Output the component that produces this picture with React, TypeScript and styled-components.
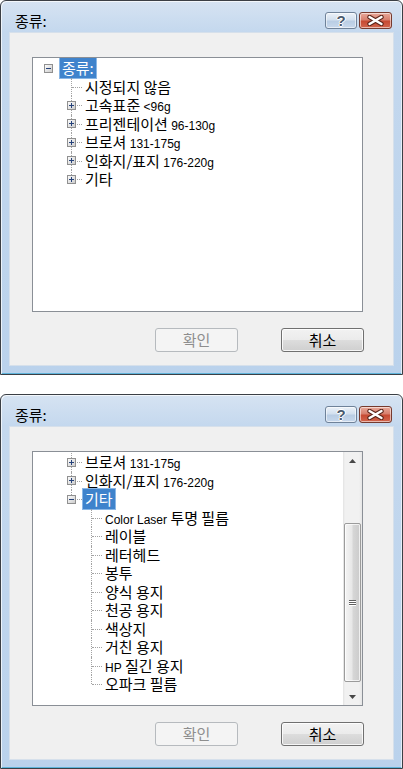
import React from 'react';
import styled, { createGlobalStyle } from 'styled-components';

const GlobalStyle = createGlobalStyle`
    html, body {
        margin: 0;
        padding: 0;
        background: #ffffff;
    }
    body {
        font-family: "Noto Sans CJK KR", "Liberation Sans", sans-serif;
        color: #000;
    }
`;

const Page = styled.div`
    width: 403px;
    display: flex;
    flex-direction: column;
    gap: 19px;
`;

const Window = styled.div`
    height: 375px;
    box-sizing: border-box;
    border: 1px solid #3b3f45;
    border-radius: 6px 6px 0 0;
    background: linear-gradient(to bottom, #d6e3f2 0px, #c4d8ee 31px, #bad2ec 100%);
    box-shadow: inset 1px 1px 0 rgba(255, 255, 255, 0.7), inset -1px 0 0 rgba(255, 255, 255, 0.6), inset 0 -1px 0 #5fb4da;
    padding: 0 8px 8px 8px;
    display: flex;
    flex-direction: column;
`;

const TitleBar = styled.div`
    height: 31px;
    box-sizing: border-box;
    display: flex;
    align-items: flex-start;
    justify-content: space-between;
    padding: 11px 2px 0 6px;
`;

const Title = styled.div`
    font-size: 15px;
    line-height: 17px;
    color: #000;
`;

const CaptionButtons = styled.div`
    display: flex;
    gap: 2px;
`;

const CaptionButton = styled.div<{ $close?: boolean }>`
    width: ${p => (p.$close ? 33 : 32)}px;
    height: 17px;
    box-sizing: border-box;
    border: 1px solid ${p => (p.$close ? '#763a2e' : '#6f8299')};
    border-radius: 3px;
    background: ${p =>
        p.$close
            ? 'linear-gradient(to bottom, #e9a99b 0%, #d7806e 45%, #c74a33 55%, #d2664e 100%)'
            : 'linear-gradient(to bottom, #ecf2f9 0%, #d3e0ef 45%, #b9cde4 55%, #c8d8ec 100%)'};
    box-shadow: inset 0 0 0 1px rgba(255, 255, 255, 0.55);
    display: flex;
    align-items: center;
    justify-content: center;
`;

const HelpGlyph = styled.span`
    font-family: "Liberation Sans", sans-serif;
    font-weight: bold;
    font-size: 15px;
    line-height: 15px;
    color: #4a5a6e;
    text-shadow: 1px 0 0 #fff, -1px 0 0 #fff, 0 1px 0 #fff, 0 -1px 0 #fff;
`;

const Client = styled.div`
    flex: 1;
    background: #f0f0f0;
    border: 1px solid #d6e0eb;
    padding: 24px 29px 0 22px;
    display: flex;
    flex-direction: column;
`;

const TreeBox = styled.div`
    width: 331px;
    height: 255px;
    box-sizing: border-box;
    border: 1px solid #8a8f96;
    background: #ffffff;
    display: flex;
    overflow: hidden;
`;

const TreeList = styled.div`
    flex: 1;
    padding-top: 1px;
    display: flex;
    flex-direction: column;
`;

const Row = styled.div<{ $indent: number }>`
    height: 18.5px;
    flex: none;
    display: flex;
    align-items: center;
    padding-left: ${p => p.$indent}px;
`;

const Joint = styled.div<{ $line: boolean; $last: boolean }>`
    width: 20px;
    height: 100%;
    flex: none;
    position: relative;
    display: flex;
    align-items: center;
    padding-left: 5px;
    box-sizing: border-box;

    &::before {
        content: '';
        display: ${p => (p.$line ? 'block' : 'none')};
        position: absolute;
        left: 9px;
        top: 0;
        bottom: ${p => (p.$last ? '50%' : '0')};
        border-left: 1px dotted #a3a3a3;
    }

    &::after {
        content: '';
        display: ${p => (p.$line ? 'block' : 'none')};
        position: absolute;
        left: 10px;
        right: 0;
        top: 50%;
        border-top: 1px dotted #a3a3a3;
    }

    svg {
        position: relative;
        z-index: 1;
        display: block;
    }
`;

const Label = styled.div<{ $selected?: boolean }>`
    height: ${p => (p.$selected ? '22px' : '18.5px')};
    box-sizing: border-box;
    padding: 0 2px;
    border: 1px solid ${p => (p.$selected ? '#8ab7e6' : 'transparent')};
    background: ${p => (p.$selected ? '#3f83cc' : 'transparent')};
    color: ${p => (p.$selected ? '#ffffff' : '#000000')};
    font-size: 15px;
    line-height: ${p => (p.$selected ? '20px' : '16.5px')};
    white-space: nowrap;
    flex: none;
`;

const Latin = styled.span`
    font-family: "Liberation Sans", sans-serif;
    font-size: 12px;
`;

const ScrollBar = styled.div`
    width: 19px;
    flex: none;
    display: flex;
    flex-direction: column;
    background: linear-gradient(to right, #e2e2e2 0px, #f1f1f1 2px, #f1f1f1 16px, #e6e6e6 19px);
`;

const ArrowButton = styled.div`
    height: 17px;
    flex: none;
    display: flex;
    align-items: center;
    justify-content: center;
`;

const Track = styled.div`
    flex: 1;
    padding: 54px 1px 0 1px;
`;

const Thumb = styled.div`
    height: 159px;
    box-sizing: border-box;
    border: 1px solid #9b9b9b;
    border-radius: 2px;
    background: linear-gradient(to right, #f4f4f4 0%, #e8e8e8 45%, #d6d6d6 55%, #cbcbcb 100%);
    box-shadow: inset 0 0 0 1px rgba(255, 255, 255, 0.7);
    display: flex;
    align-items: center;
    justify-content: center;
`;

const Grip = styled.div`
    width: 7px;
    display: flex;
    flex-direction: column;
    gap: 1px;

    span {
        height: 1px;
        background: #5f5f5f;
        box-shadow: 0 1px 0 #ffffff;
    }
`;

const ButtonRow = styled.div`
    margin-top: 16px;
    display: flex;
    justify-content: flex-end;
    gap: 43px;
`;

const PushButton = styled.button<{ $disabled?: boolean }>`
    width: 83px;
    height: 24px;
    box-sizing: border-box;
    padding: 0;
    margin: 0;
    border: 1px solid ${p => (p.$disabled ? '#b6babe' : '#707070')};
    border-radius: 3px;
    background: ${p =>
        p.$disabled
            ? '#f4f4f4'
            : 'linear-gradient(to bottom, #f2f2f2 0%, #ebebeb 50%, #dddddd 50%, #cfcfcf 100%)'};
    box-shadow: ${p => (p.$disabled ? 'none' : 'inset 0 0 0 1px rgba(255, 255, 255, 0.8)')};
    color: ${p => (p.$disabled ? '#8e8e8e' : '#000000')};
    font-family: "Noto Sans CJK KR", sans-serif;
    font-size: 15px;
    line-height: 20px;
`;

function Expander({ open }: { open: boolean }) {
    return (
        <svg width="9" height="9" viewBox="0 0 9 9">
            <defs>
                <linearGradient id="expGrad" x1="0" y1="0" x2="1" y2="1">
                    <stop offset="0" stopColor="#ffffff" />
                    <stop offset="1" stopColor="#c9c9c9" />
                </linearGradient>
            </defs>
            <rect x="0.5" y="0.5" width="8" height="8" fill="url(#expGrad)" stroke="#909090" />
            <path d="M2 4.5h5" stroke="#26427a" strokeWidth="1" />
            {!open && <path d="M4.5 2v5" stroke="#26427a" strokeWidth="1" />}
        </svg>
    );
}

function Arrow({ down }: { down?: boolean }) {
    return (
        <svg width="7" height="4" viewBox="0 0 7 4">
            <path d={down ? 'M0 0h7L3.5 4z' : 'M0 4h7L3.5 0z'} fill="#474747" />
        </svg>
    );
}

function CloseGlyph() {
    return (
        <svg width="21" height="11" viewBox="0 0 21 11">
            <path d="M4.5 2L16.5 9M16.5 2L4.5 9" stroke="#5b2419" strokeWidth="4.4" strokeLinecap="round" />
            <path d="M4.5 2L16.5 9M16.5 2L4.5 9" stroke="#ffffff" strokeWidth="2.4" strokeLinecap="round" />
        </svg>
    );
}

type Node = {
    level: number;
    label: React.ReactNode;
    expander?: 'open' | 'closed';
    last?: boolean;
    selected?: boolean;
};

const indents = [6, 29, 49];

function TreeRow({ node }: { node: Node }) {
    return (
        <Row $indent={indents[node.level]}>
            <Joint $line={node.level > 0} $last={!!node.last}>
                {node.expander && <Expander open={node.expander === 'open'} />}
            </Joint>
            <Label $selected={node.selected}>{node.label}</Label>
        </Row>
    );
}

const firstTree: Node[] = [
    { level: 0, label: '종류:', expander: 'open', selected: true },
    { level: 1, label: '시정되지 않음' },
    { level: 1, label: <>고속표준 <Latin>&lt;96g</Latin></>, expander: 'closed' },
    { level: 1, label: <>프리젠테이션 <Latin>96-130g</Latin></>, expander: 'closed' },
    { level: 1, label: <>브로셔 <Latin>131-175g</Latin></>, expander: 'closed' },
    { level: 1, label: <>인화지/표지 <Latin>176-220g</Latin></>, expander: 'closed' },
    { level: 1, label: '기타', expander: 'closed', last: true },
];

const secondTree: Node[] = [
    { level: 1, label: <>브로셔 <Latin>131-175g</Latin></>, expander: 'closed' },
    { level: 1, label: <>인화지/표지 <Latin>176-220g</Latin></>, expander: 'closed' },
    { level: 1, label: '기타', expander: 'open', last: true, selected: true },
    { level: 2, label: <><Latin>Color Laser</Latin> 투명 필름</> },
    { level: 2, label: '레이블' },
    { level: 2, label: '레터헤드' },
    { level: 2, label: '봉투' },
    { level: 2, label: '양식 용지' },
    { level: 2, label: '천공 용지' },
    { level: 2, label: '색상지' },
    { level: 2, label: '거친 용지' },
    { level: 2, label: <><Latin>HP</Latin> 질긴 용지</> },
    { level: 2, label: '오파크 필름', last: true },
];

function Dialog({ nodes, scroll }: { nodes: Node[]; scroll?: boolean }) {
    return (
        <Window>
            <TitleBar>
                <Title>종류:</Title>
                <CaptionButtons>
                    <CaptionButton>
                        <HelpGlyph>?</HelpGlyph>
                    </CaptionButton>
                    <CaptionButton $close>
                        <CloseGlyph />
                    </CaptionButton>
                </CaptionButtons>
            </TitleBar>
            <Client>
                <TreeBox>
                    <TreeList>
                        {nodes.map((node, index) => (
                            <TreeRow key={index} node={node} />
                        ))}
                    </TreeList>
                    {scroll && (
                        <ScrollBar>
                            <ArrowButton>
                                <Arrow />
                            </ArrowButton>
                            <Track>
                                <Thumb>
                                    <Grip>
                                        <span />
                                        <span />
                                        <span />
                                    </Grip>
                                </Thumb>
                            </Track>
                            <ArrowButton>
                                <Arrow down />
                            </ArrowButton>
                        </ScrollBar>
                    )}
                </TreeBox>
                <ButtonRow>
                    <PushButton $disabled>확인</PushButton>
                    <PushButton>취소</PushButton>
                </ButtonRow>
            </Client>
        </Window>
    );
}

export default function App() {
    return (
        <>
            <GlobalStyle />
            <Page>
                <Dialog nodes={firstTree} />
                <Dialog nodes={secondTree} scroll />
            </Page>
        </>
    );
}
